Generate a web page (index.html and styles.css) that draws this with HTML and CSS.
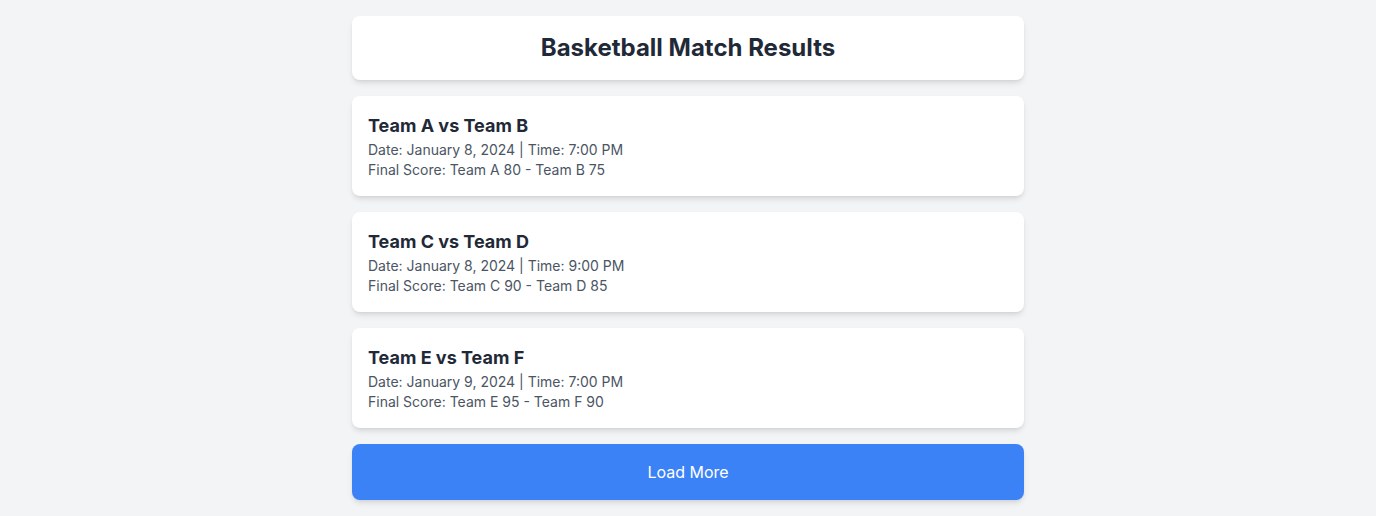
FILE: index.html
```html
<!DOCTYPE html>
<html lang="en">
<head>
<meta charset="utf-8">
<title>Basketball Match Results</title>
<link rel="stylesheet" href="styles.css">
</head>
<body>
<main class="container">
  <header class="card header">
    <h1 class="title">Basketball Match Results</h1>
  </header>
  <section class="card match">
    <h2 class="match-title">Team A vs Team B</h2>
    <p class="meta">Date: January 8, 2024 | Time: 7:00 PM</p>
    <p class="meta">Final Score: Team A 80 - Team B 75</p>
  </section>
  <section class="card match">
    <h2 class="match-title">Team C vs Team D</h2>
    <p class="meta">Date: January 8, 2024 | Time: 9:00 PM</p>
    <p class="meta">Final Score: Team C 90 - Team D 85</p>
  </section>
  <section class="card match">
    <h2 class="match-title">Team E vs Team F</h2>
    <p class="meta">Date: January 9, 2024 | Time: 7:00 PM</p>
    <p class="meta">Final Score: Team E 95 - Team F 90</p>
  </section>
  <button class="load-more" type="button">Load More</button>
</main>
</body>
</html>
```
FILE: styles.css
```css
* { box-sizing: border-box; }
html, body { margin: 0; padding: 0; }
body {
  background: #f3f4f6;
  font-family: Inter, "Noto Sans", sans-serif;
  color: #1f2937;
}
.container {
  max-width: 672px;
  margin: 0 auto;
  padding: 16px 0;
  display: flex;
  flex-direction: column;
  gap: 16px;
}
.card {
  background: #ffffff;
  border-radius: 8px;
  box-shadow: 0 4px 6px -1px rgba(0,0,0,0.1), 0 2px 4px -2px rgba(0,0,0,0.1);
  padding: 16px;
}
.title {
  margin: 0;
  text-align: center;
  font-size: 24px;
  line-height: 32px;
  font-weight: 700;
  color: #1f2937;
}
.match-title {
  margin: 0;
  font-size: 18px;
  line-height: 28px;
  font-weight: 700;
  color: #1f2937;
}
.meta {
  margin: 0;
  font-size: 14px;
  line-height: 20px;
  color: #4b5563;
}
.load-more {
  display: block;
  width: 100%;
  border: 0;
  border-radius: 8px;
  background: #3b82f6;
  color: #ffffff;
  font-family: Inter, "Noto Sans", sans-serif;
  font-size: 16px;
  line-height: 24px;
  padding: 16px;
  cursor: pointer;
  box-shadow: 0 4px 6px -1px rgba(0,0,0,0.1), 0 2px 4px -2px rgba(0,0,0,0.1);
}
```
